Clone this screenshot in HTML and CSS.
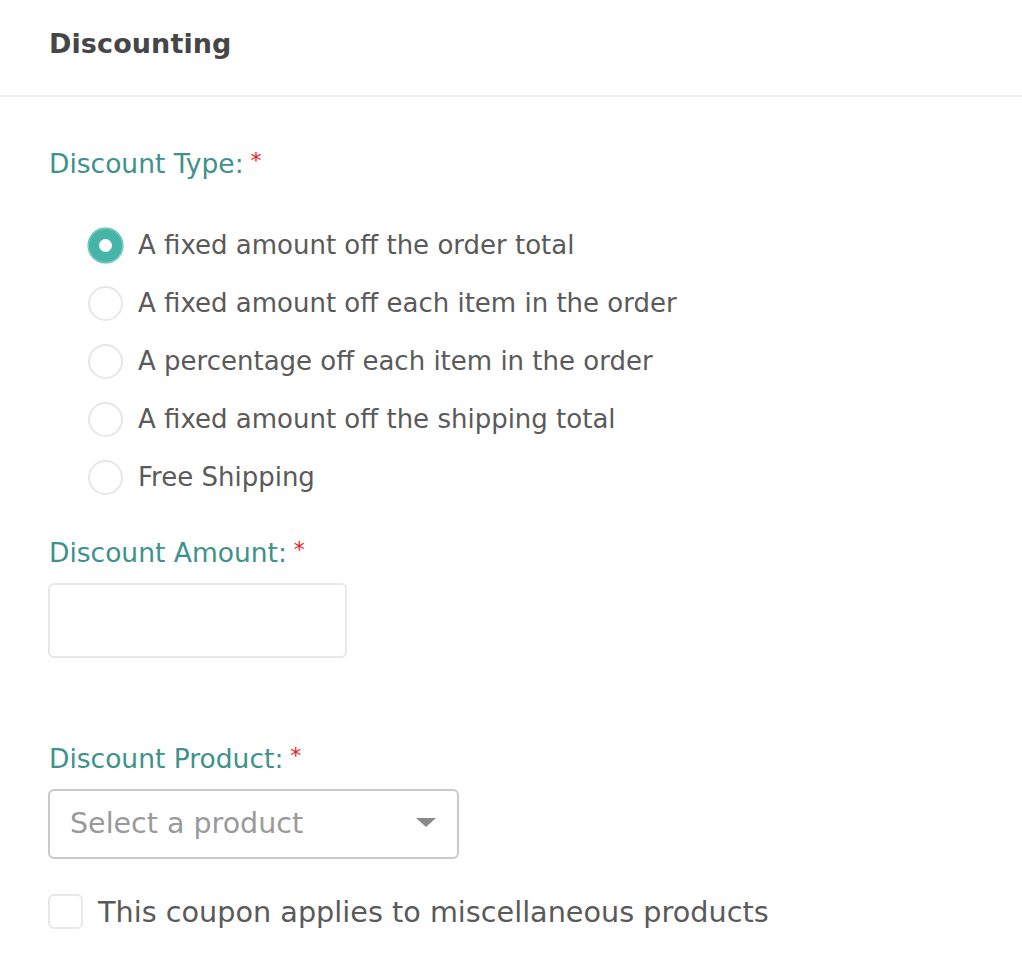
FILE: index.html
```html
<!DOCTYPE html>
<html lang="en">
<head>
<meta charset="utf-8">
<title>Discounting</title>
<link rel="stylesheet" href="styles.css">
</head>
<body>
<div class="panel">
  <div class="panel-header">
    <h2 class="panel-title">Discounting</h2>
  </div>
  <div class="panel-body">
    <div class="field-label label-type">Discount Type:<span class="req">*</span></div>
    <div class="radio-list">
      <div class="radio-row"><span class="radio checked"><span class="dot"></span></span><span class="radio-text">A fixed amount off the order total</span></div>
      <div class="radio-row"><span class="radio"></span><span class="radio-text">A fixed amount off each item in the order</span></div>
      <div class="radio-row"><span class="radio"></span><span class="radio-text">A percentage off each item in the order</span></div>
      <div class="radio-row"><span class="radio"></span><span class="radio-text">A fixed amount off the shipping total</span></div>
      <div class="radio-row"><span class="radio"></span><span class="radio-text">Free Shipping</span></div>
    </div>
    <div class="field-label label-amount">Discount Amount:<span class="req">*</span></div>
    <div class="text-input"></div>
    <div class="field-label label-product">Discount Product:<span class="req">*</span></div>
    <div class="select">
      <span class="select-placeholder">Select a product</span>
      <svg class="select-arrow" width="20" height="10" viewBox="0 0 20 10"><path d="M0 0 H20 L10 9 Z" fill="#8a8a8a"/></svg>
    </div>
    <div class="check-row">
      <span class="checkbox"></span>
      <span class="check-text">This coupon applies to miscellaneous products</span>
    </div>
  </div>
</div>
</body>
</html>
```
FILE: styles.css
```css
html, body {
  margin: 0;
  padding: 0;
  background: #ffffff;
}
body {
  font-family: "DejaVu Sans", "Noto Sans", sans-serif;
  color: #5a5a5a;
}
.panel-header {
  border-bottom: 2px solid #eeeeee;
  padding-left: 49px;
  display: flex;
  align-items: center;
  box-sizing: border-box;
  height: 97px;
}
.panel-title {
  margin: 0;
  margin-top: -8px;
  font-size: 27px;
  font-weight: bold;
  color: #464649;
  letter-spacing: 0.1px;
}
.panel-body {
  padding: 0 48px 40px 48px;
  display: flex;
  flex-direction: column;
  align-items: flex-start;
}
.field-label {
  font-size: 26.5px;
  line-height: 32px;
  color: #3d928a;
  padding-left: 1px;
  display: flex;
  align-items: flex-start;
}
.req {
  color: #f2141b;
  font-size: 22px;
  line-height: 20px;
  margin-left: 7px;
  margin-top: 3px;
}
.label-type { margin-top: 51px; }
.radio-list {
  margin-top: 36px;
  padding-left: 40px;
  display: flex;
  flex-direction: column;
}
.radio-row {
  height: 58px;
  display: flex;
  align-items: center;
}
.radio {
  width: 35px;
  height: 35px;
  box-sizing: border-box;
  border-radius: 50%;
  border: 2px solid #e7e7e7;
  background: #fff;
  display: flex;
  align-items: center;
  justify-content: center;
  flex-shrink: 0;
}
.radio.checked {
  background: #47b4a8;
  border: 1.5px solid #86cfc6;
  box-shadow: 0 0 0 0.5px #47b4a8;
}
.dot {
  width: 13px;
  height: 13px;
  border-radius: 50%;
  background: #ffffff;
}
.radio-text {
  margin-left: 15px;
  font-size: 26px;
  line-height: 32px;
  color: #5a5a5a;
}
.label-amount { margin-top: 31px; }
.text-input {
  margin-top: 14px;
  width: 299px;
  height: 75px;
  box-sizing: border-box;
  border: 2px solid #e8e8e8;
  border-radius: 6px;
}
.label-product { margin-top: 85px; }
.select {
  margin-top: 14px;
  width: 411px;
  height: 70px;
  box-sizing: border-box;
  border: 2px solid #c9c9c9;
  border-radius: 6px;
  display: flex;
  align-items: center;
  justify-content: space-between;
  padding: 0 21px 0 20px;
}
.select-placeholder {
  font-size: 28.5px;
  line-height: 34px;
  color: #9a9a9a;
}
.select-arrow {
  display: block;
  margin-top: -2px;
}
.check-row {
  margin-top: 35px;
  display: flex;
  align-items: center;
}
.checkbox {
  width: 35px;
  height: 35px;
  box-sizing: border-box;
  border: 2px solid #e8e8e8;
  border-radius: 6px;
  flex-shrink: 0;
}
.check-text {
  margin-left: 15px;
  font-size: 28.7px;
  line-height: 34px;
  color: #5a5a5a;
}
```
